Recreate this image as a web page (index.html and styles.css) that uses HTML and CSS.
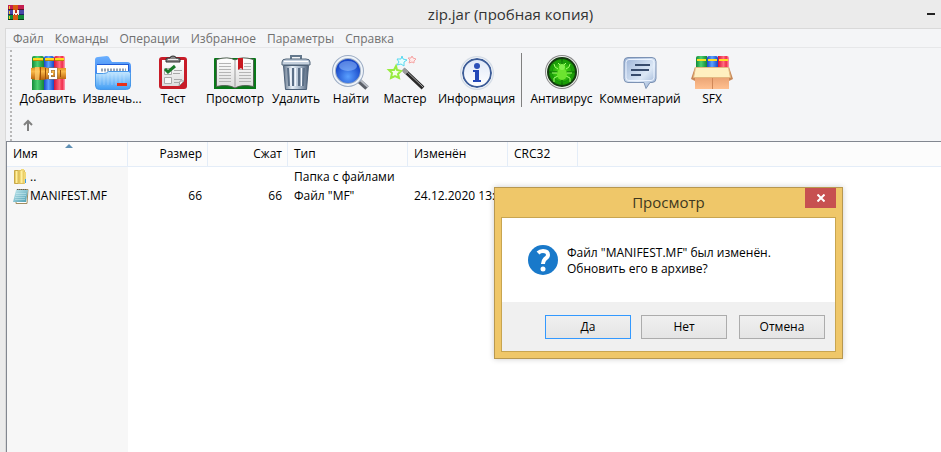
FILE: index.html
```html
<!DOCTYPE html>
<html lang="ru">
<head>
<meta charset="utf-8">
<title>zip.jar (пробная копия)</title>
<link rel="stylesheet" href="styles.css">
</head>
<body>
<svg class="defs" width="0" height="0" aria-hidden="true">
  <defs>
    <linearGradient id="gGreen"><stop offset="0" stop-color="#128a38"/><stop offset=".45" stop-color="#4cd070"/><stop offset="1" stop-color="#158538"/></linearGradient>
    <linearGradient id="gBlue"><stop offset="0" stop-color="#1c45c8"/><stop offset=".45" stop-color="#5aa2ff"/><stop offset="1" stop-color="#1a48c4"/></linearGradient>
    <linearGradient id="gRed"><stop offset="0" stop-color="#d81238"/><stop offset=".5" stop-color="#ff6c80"/><stop offset=".75" stop-color="#f02c4a"/><stop offset="1" stop-color="#ff9ab4"/></linearGradient>
    <linearGradient id="gStrap" x2="0" y2="1"><stop offset="0" stop-color="#e08a18"/><stop offset=".35" stop-color="#f8b848"/><stop offset="1" stop-color="#b85c08"/></linearGradient>
    <linearGradient id="gFolder" x2="0" y2="1"><stop offset="0" stop-color="#c6e8ff"/><stop offset="1" stop-color="#3f9cf4"/></linearGradient>
    <linearGradient id="gFolderBack" x2="0" y2="1"><stop offset="0" stop-color="#6ab0ff"/><stop offset="1" stop-color="#2468e4"/></linearGradient>
    <linearGradient id="gPaper" x2="0" y2="1"><stop offset="0" stop-color="#fff"/><stop offset="1" stop-color="#dcdcdc"/></linearGradient>
    <linearGradient id="gSteel"><stop offset="0" stop-color="#66788e"/><stop offset=".35" stop-color="#e8f0f8"/><stop offset=".65" stop-color="#a8b8ca"/><stop offset="1" stop-color="#50627a"/></linearGradient>
    <radialGradient id="gLens" cy=".7"><stop offset="0" stop-color="#5aa0ff"/><stop offset="1" stop-color="#1848c8"/></radialGradient>
    <linearGradient id="gInfo" x2="0" y2="1"><stop offset="0" stop-color="#dfe8f8"/><stop offset="1" stop-color="#fff"/></linearGradient>
    <radialGradient id="gVirus"><stop offset="0" stop-color="#52f018"/><stop offset="1" stop-color="#108a04"/></radialGradient>
    <linearGradient id="gBubble" x2="1" y2="1"><stop offset="0" stop-color="#9ab2d6"/><stop offset=".6" stop-color="#dce8f6"/><stop offset="1" stop-color="#90aad0"/></linearGradient>
    <linearGradient id="gBox" x2="0" y2="1"><stop offset="0" stop-color="#e8a070"/><stop offset="1" stop-color="#ffc090"/></linearGradient>
    <linearGradient id="gYellow"><stop offset="0" stop-color="#d8b038"/><stop offset=".5" stop-color="#fff0a0"/><stop offset="1" stop-color="#e0bc48"/></linearGradient>
    <linearGradient id="gNote" x2="1" y2="1"><stop offset="0" stop-color="#c4eaf0"/><stop offset="1" stop-color="#4a9cb0"/></linearGradient>
  </defs>
</svg>
<div class="window">
  <header class="titlebar">
    <svg class="app-icon" width="16" height="16" viewBox="0 0 16 16" aria-hidden="true">
      <path fill="#c41e50" d="M0 0h16v5H0z"/><path fill="#4848a8" d="M0 5h16v5H0z"/><path fill="#128a38" d="M0 10h16v5H0z"/>
      <path fill="#5c1028" d="M0 4h16v1H0z"/><path fill="#202060" d="M0 9h16v1H0z"/><path fill="#064018" d="M0 14h16v1H0z"/>
      <path fill="#f0c830" d="M1 1h1v3H1zM1 6h1v3H1zM1 11h1v3H1z"/><path fill="#d85c10" d="M5 0h5v15H5z"/>
      <path fill="#f8f0e8" d="M5 5h6v5H5z"/><path fill="#c02c20" d="M7 5h2v3H7zM6 9h1v1H6zM9 9h1v1H9z"/>
    </svg>
    <h1 class="title">zip.jar (пробная копия)</h1>
    <button class="minimize" type="button" aria-label="Свернуть"></button>
  </header>
  <div class="frame">
    <nav class="menu">
      <a href="#">Файл</a><a href="#">Команды</a><a href="#">Операции</a><a href="#">Избранное</a><a href="#">Параметры</a><a href="#">Справка</a>
    </nav>
    <div class="bars">
      <div class="toolbar">
        <button type="button" class="tool">
          <svg viewBox="0 0 44 36"><path fill="url(#gGreen)" d="M6 3q0-2 2-2h8q2 0 2 2v32H6z"/><path fill="url(#gBlue)" d="M18 3q0-2 2-2h6q2 0 2 2v32H18z"/><path fill="url(#gRed)" d="M28 3q0-2 2-2h7q2 0 2 2v32H28z"/><path fill="#ffdc20" d="M7 3h10v3H7zM19 3h9v3h-9zM29 3h9v3h-9z"/><path fill="#b88800" d="M7 5h10v1H7zM19 5h9v1h-9zM29 5h9v1h-9z"/><path fill="url(#gStrap)" d="M5 13q12-2 17 0h18v11H22q-8 2-17 0z"/><path fill="#ffd070" opacity=".7" d="M9 12h4v13H9z"/><path fill="#9c5008" d="M14 12h1v13h-1zM19 13h1v11h-1zM34 15h1v7h-1z"/><path fill="none" stroke="#8a7050" stroke-width="3" d="M24 14h6v9h-6z"/><path fill="none" stroke="#fff" stroke-width="2" d="M24 14h6v9h-6zM22 19h5"/></svg>
          <span>Добавить</span></button>
        <button type="button" class="tool">
          <svg viewBox="0 0 44 36"><path fill="url(#gFolderBack)" d="M5 5q0-3 3-3l9-1q2 0 3 3l2 3h15q4 0 4 4v20H5z"/><path fill="#1e5cd8" d="M7 9h32v10H7z"/><path fill="#fff" d="M7 10h31v11H7z"/><path stroke="#98a4b4" stroke-width="3" stroke-dasharray="2 1" d="M11 15h25"/><path fill="url(#gFolder)" stroke="#4898e8" d="M5.500 18.500h8q3 0 5-2h20q2 0 2 2v12q0 4-4 4h-27q-4 0-4-4z"/><path stroke="#fff" opacity=".25" d="M10 20v10M14 20v10M18 19v11M22 19v11M26 19v11M30 19v11M34 19v11"/><path fill="#e83018" d="M27 28h10v3H27z"/></svg>
          <span>Извлечь...</span></button>
        <button type="button" class="tool">
          <svg viewBox="0 0 44 36"><rect x="8" y="2" width="28" height="32" rx="3" fill="#c81c28"/><path fill="url(#gPaper)" d="M11 5h22v21l-5 5H11z"/><path fill="#fff" stroke="#999" d="m33 26-5 5 1-5z"/><path fill="#888" stroke="#303030" d="M15 7V4q0-1 2-1h2q0-2 3-2t3 2h2q2 0 2 1v3z"/><path fill="#eee" d="M17 4h10v1H17z"/><path fill="#f6f6f6" stroke="#aaa" d="M13.500 13.500h7v6h-7zM13.500 22.500h7v6h-7z"/><path fill="none" stroke="#187828" stroke-width="3" d="m14 14 3 3 7-6"/><path stroke="#a8a8a8" d="M23 15.500h8M22 18.500h7M23 24.500h8M23 27.500h5"/></svg>
          <span>Тест</span></button>
        <button type="button" class="tool">
          <svg viewBox="0 0 44 36"><path fill="#087818" d="M1 4q0-1 1-1h40q1 0 1 1v30H1z"/><path fill="url(#gPaper)" stroke="#506050" d="M3.500 4.500Q15 1 22 5q7-4 18.500-.5v27Q29 29 22 33 15 29 3.500 31.500z"/><path fill="#888" opacity=".4" d="M21 5l1 1 1-1v26l-1 2-1-2z"/><path stroke="#b4b4b4" d="M6 8.500h12M6 11.500h12M6 14.500h12M6 17.500h12M6 20.500h12M6 23.500h12M6 26.500h12M26 14.500h12M26 17.500h12M26 20.500h12M26 23.500h12M26 26.500h12M31 8.500h7M31 11.500h7"/><path fill="#c81820" d="M25 3h5v12l-2-2-3 2z"/></svg>
          <span>Просмотр</span></button>
        <button type="button" class="tool">
          <svg viewBox="0 0 44 36"><path fill="none" stroke="#64788c" stroke-width="2" d="M17 4V1h10v3"/><path fill="url(#gSteel)" stroke="#4c6078" d="M9.500 10.500h25l-2 24h-21z"/><path stroke="#5c7088" stroke-width="2" d="m14 13 1 18M19 13v18M25 13v18M30 13l-1 18"/><path stroke="#f4f8ff" d="m16 13 1 18M21.500 13v18M27.500 13v18"/><path fill="#c4d0de" stroke="#506478" d="M8 7q0-3 4-3h20q4 0 4 3v3H8z"/><path stroke="#fff" d="M10 6.500h24"/></svg>
          <span>Удалить</span></button>
        <button type="button" class="tool">
          <svg viewBox="0 0 44 36"><path stroke="#5c6068" stroke-width="5" d="m28 24 10 9"/><path stroke="#b8bcc4" stroke-width="2" d="m29 23 10 9"/><circle cx="19" cy="16" r="14" fill="url(#gLens)" stroke="#9cacc4" stroke-width="4"/><circle cx="19" cy="16" r="14" fill="none" stroke="#eef3f9" stroke-width="2"/><ellipse cx="19" cy="11" rx="9" ry="5" fill="#9cc4ff" opacity=".5"/></svg>
          <span>Найти</span></button>
        <button type="button" class="tool">
          <svg viewBox="0 0 44 36"><path stroke="#282828" stroke-width="4" d="m21 15 19 18"/><path stroke="#aaa" d="m21 14 19 18"/><path stroke="#999" stroke-width="4" d="m20 14 4 4"/><path fill="#f4ffe8" stroke="#98ec40" stroke-width="2" d="m13 11 1 4 4 1-3 3 1 4-4-2-4 2 1-5-3-3 5 0z"/><path fill="#e8ffff" stroke="#58d8f0" d="m19 1 1 3 4 1-3 2v4l-3-2-4 1 2-3-2-3h4z"/><path fill="#ffeaea" stroke="#f4a4a4" d="m29 1 1 2 3 1-2 2v2l-2-1-3 1 1-3-2-2h3z"/></svg>
          <span>Мастер</span></button>
        <button type="button" class="tool">
          <svg viewBox="0 0 44 36"><circle cx="22" cy="18" r="17" fill="#d4dce6"/><circle cx="22" cy="18" r="14" fill="url(#gInfo)" stroke="#3c5c98" stroke-width="2"/><circle cx="22" cy="18" r="15.500" fill="none" stroke="#eef2f8"/><circle cx="22" cy="11" r="3" fill="#2c50b8"/><path fill="#2448b8" d="M18 15h6v10h2v2h-8v-2h2v-8h-2z"/></svg>
          <span>Информация</span></button>
        <span class="divider"></span>
        <button type="button" class="tool">
          <svg viewBox="0 0 44 36"><circle cx="22" cy="17" r="17" fill="#888"/><circle cx="22" cy="17" r="16" fill="#f0f0f0"/><circle cx="22" cy="17" r="14" fill="url(#gVirus)" stroke="#143c10" stroke-width="2"/><path stroke="#086004" d="M22 4v26M9 17h26"/><circle cx="22" cy="17" r="10" fill="none" stroke="#16940c"/><path fill="none" stroke="#a4ff70" d="m18 14-3-2-1-3M26 14l3-2 1-3M17 18h-5M27 18h5M18 21l-4 2v4M26 21l4 2v4M20 10l-2-2M24 10l2-2"/><ellipse cx="22" cy="19" rx="5" ry="6" fill="#6ce430"/><circle cx="22" cy="12" r="3" fill="#84f050"/></svg>
          <span>Антивирус</span></button>
        <button type="button" class="tool">
          <svg viewBox="0 0 44 36"><path fill="url(#gBubble)" stroke="#7c92b4" d="M10 2.500h24q4 0 4 4v17q0 4-4 4h-2l-4 6-2-6H10q-4 0-4-4v-17q0-4 4-4z"/><path fill="none" stroke="#edf4ff" d="M11 4.500h22q3 0 3 3v15q0 3-3 3H11q-3 0-3-3v-15q0-3 3-3z"/><path stroke="#384c6c" stroke-width="2" d="M17 10h15M13 15h18M13 20h10"/></svg>
          <span>Комментарий</span></button>
        <button type="button" class="tool">
          <svg viewBox="0 0 44 36"><path fill="url(#gGreen)" d="M6 3q0-2 2-2h9v13H6z"/><path fill="url(#gBlue)" d="M17 3q0-2 2-2h7q2 0 2 2v11H17z"/><path fill="url(#gRed)" d="M28 1h9q2 0 2 2v11H28z"/><path fill="#ffe020" d="M7 4h9v2H7zM18 4h9v2h-9zM29 4h9v2h-9z"/><path fill="#c88858" d="m5 12-4 12 4 2zM39 12l4 12-4 2z"/><path fill="url(#gBox)" d="M5 21h34v13H5z"/><path fill="#fff0c0" stroke="#e4b880" d="M5.500 12.500h33l2 10h-37z"/><path stroke="#d08858" d="M22.500 23v11"/></svg>
          <span>SFX</span></button>
      </div>
      <div class="address">
        <button type="button" class="up" aria-label="Вверх"><svg width="12" height="12" viewBox="0 0 12 12"><path fill="none" stroke="#808080" stroke-width="2" d="M6 12V2M2 6l4-4 4 4"/></svg></button>
      </div>
    </div>
    <main class="list">
      <table class="files">
        <colgroup><col class="c-name"><col class="c-num"><col class="c-num"><col class="c-type"><col class="c-date"><col class="c-crc"><col></colgroup>
        <thead><tr><th class="sorted">Имя</th><th class="num">Размер</th><th class="num">Сжат</th><th>Тип</th><th>Изменён</th><th>CRC32</th><th></th></tr></thead>
        <tbody>
          <tr><td><div class="file"><svg width="16" height="16" viewBox="0 0 16 16"><path fill="url(#gYellow)" stroke="#c8a848" d="M1.500 1.500h4v13h-4z"/><path fill="url(#gYellow)" stroke="#dcc060" d="M5.500 1.500h6v13h-6z"/><path fill="#f0d878" d="M8 0h3v2H8zM11 3h2v11h-2z"/><path fill="#3c9ce8" d="M12 10h1v4h-1z"/></svg>..</div></td><td></td><td></td><td>Папка с файлами</td><td></td><td></td><td></td></tr>
          <tr><td><div class="file"><svg width="16" height="16" viewBox="0 0 16 16"><path fill="#fff" stroke="#a08c60" d="M4 1.500h11l-1 14H3z"/><path fill="url(#gNote)" d="M3 2h12l-2 12H0z"/><path stroke="#e0f8fc" opacity=".4" d="M3 5.500h10M3 7.500h10M2 9.500h10M2 11.500h10"/><path stroke="#506068" stroke-dasharray="1 1" d="M4 1.500h10"/></svg>MANIFEST.MF</div></td><td class="num">66</td><td class="num">66</td><td>Файл "MF"</td><td>24.12.2020 13:59</td><td></td><td></td></tr>
        </tbody>
      </table>
    </main>
  </div>
  <section class="dialog" role="dialog" aria-labelledby="dlg-title">
    <header class="dialog-head">
      <h2 id="dlg-title">Просмотр</h2>
      <button type="button" class="close" aria-label="Закрыть"><svg width="8" height="8" viewBox="0 0 8 8"><path stroke="#fff" stroke-width="2" d="m0.500 0.500 7 7m0-7-7 7"/></svg></button>
    </header>
    <div class="dialog-body">
      <div class="message">
        <svg width="30" height="30" viewBox="0 0 30 30" aria-hidden="true"><circle cx="15" cy="15" r="15" fill="#1979ca"/><path fill="none" stroke="#fff" stroke-width="4" d="M10 8q2-2 5-2 5 0 5 4 0 2-3 4-2 2-2 5"/><circle cx="15" cy="24" r="2.500" fill="#fff"/></svg>
        <p>Файл "MANIFEST.MF" был изменён.<br>Обновить его в архиве?</p>
      </div>
      <div class="actions">
        <button type="button" class="btn default">Да</button>
        <button type="button" class="btn">Нет</button>
        <button type="button" class="btn last">Отмена</button>
      </div>
    </div>
  </section>
</div>
</body>
</html>
```
FILE: styles.css
```css
* { box-sizing: border-box; }
body { margin: 0; font: 12px/16px "Open Sans", "Noto Sans", sans-serif; color: #000; }
button { font: inherit; color: inherit; padding: 0; border: 0; background: none; }
svg { display: block; flex: none; }
.defs { position: absolute; }
.window { position: relative; display: flex; flex-direction: column; min-height: 100vh; background: #ebebeb; }
.titlebar { display: flex; align-items: center; height: 28px; padding: 0 6px 0 8px; }
.app-icon { margin-bottom: 2px; }
.title { flex: 1; margin: 0; padding-left: 102px; text-align: center; font-size: 15px; line-height: 20px; font-weight: 400; color: #333; }
.minimize { width: 40px; height: 24px; display: flex; align-items: center; justify-content: flex-end; }
.minimize::before { content: ""; width: 8px; height: 2px; background: #222; }
.frame { flex: 1; display: flex; flex-direction: column; margin-left: 5px; border: 1px solid #d9d9d9; border-width: 1px 0 0 1px; background: #f4f5f7; }
.menu { display: flex; gap: 11px; height: 19px; padding: 2px 0 0 7px; border-bottom: 1px solid #e6e7e9; }
.menu a { color: #707070; text-decoration: none; }
.bars { margin-top: 2px; margin-left: 4px; border-left: 2px dotted #b8b8b8; }
.toolbar { display: grid; grid-template-columns: 64px 64px 58px 66px 56px 54px 54px 89px 1px 79px 78px 66px; padding: 5px 0 0 4px; height: 61px; }
.tool { display: flex; flex-direction: column; align-items: center; white-space: nowrap; }
.tool svg { width: 44px; height: 36px; }
.divider { height: 54px; margin-top: -2px; background: #808080; }
.address { display: flex; height: 30px; padding: 8px 0 0 10px; }
.up { align-self: flex-start; }
.list { flex: 1; border-top: 1px solid #828790; border-left: 1px solid #828790; background: linear-gradient(#f7f7f7, #f7f7f7) 0 0 / 121px 100% no-repeat #fff; }
.files { table-layout: fixed; width: 100%; border-collapse: separate; border-spacing: 0; }
.c-name { width: 121px; }
.c-num { width: 80px; }
.c-type { width: 120px; }
.c-date { width: 100px; }
.c-crc { width: 70px; }
thead { background: #fcfcfc; }
th, td { padding: 0 6px; text-align: left; font-weight: 400; white-space: nowrap; }
th { height: 25px; border-right: 1px solid #e4edf8; border-bottom: 1px solid #e4edf8; }
th:last-child { border-right: 0; }
td { height: 19px; line-height: 19px; }
.num { text-align: right; }
th.num { padding-right: 5px; }
.sorted { position: relative; }
.sorted::after { content: ""; position: absolute; top: 2px; left: 58px; border: 4px solid transparent; border-top: 0; border-bottom-color: #6090b4; }
.file { display: flex; align-items: center; gap: 1px; }
.dialog { position: absolute; left: 494px; top: 187px; width: 349px; padding: 0 6px 6px; border: 1px solid #b89850; background: #efc769; box-shadow: 0 0 6px rgba(0, 0, 0, .2); }
.dialog-head { display: flex; align-items: flex-start; height: 29px; }
.dialog-head h2 { flex: 1; margin: 0; padding-left: 31px; font-size: 15px; line-height: 29px; font-weight: 400; text-align: center; color: #403820; }
.close { width: 31px; height: 20px; display: grid; place-items: center; background: #c75050; }
.dialog-body { border: 1px solid #c8a550; background: #fff; }
.message { display: flex; align-items: flex-start; gap: 9px; height: 84px; padding: 27px 0 0 26px; }
.message p { margin: 0; line-height: 16px; }
.actions { display: flex; justify-content: flex-end; gap: 10px; padding: 13px 10px 12px; background: #f0f0f0; }
.btn { width: 86px; height: 24px; border: 1px solid #acacac; background: linear-gradient(#f0f0f0, #e5e5e5); }
.btn.default { border-color: #3399ff; }
.btn.last { margin-left: 2px; }
```
